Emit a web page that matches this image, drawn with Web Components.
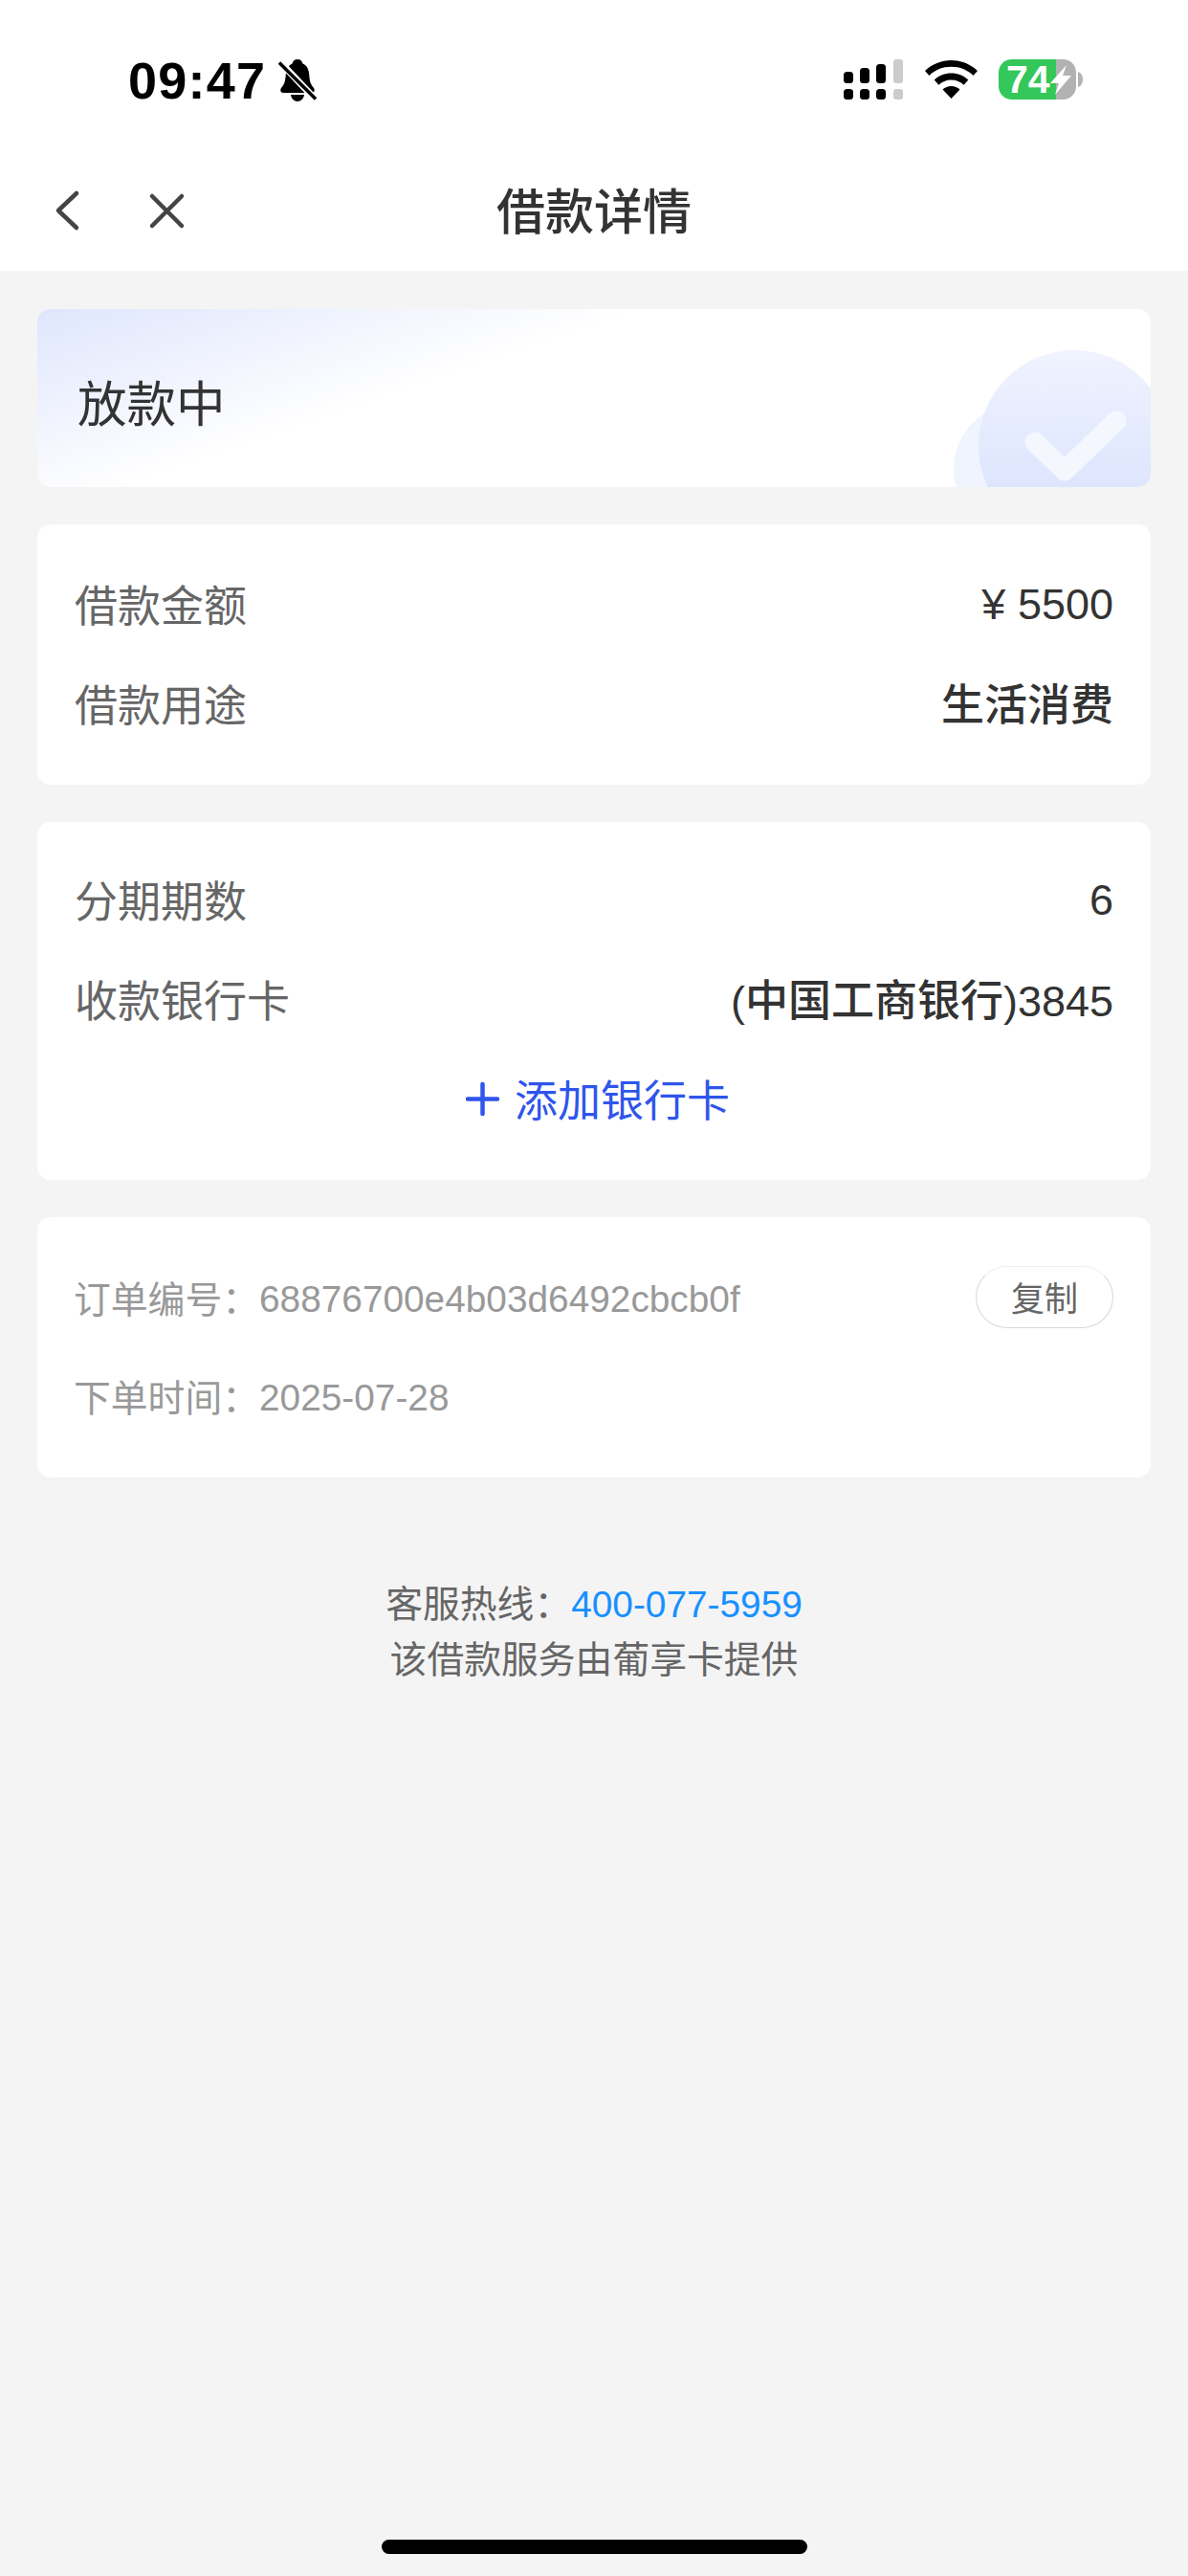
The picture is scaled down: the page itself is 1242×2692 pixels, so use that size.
<!DOCTYPE html>
<html lang="zh">
<head>
<meta charset="utf-8">
<title>借款详情</title>
<style>
  html, body { margin: 0; padding: 0; background: #f4f4f4; }
  body { font-family: "Liberation Sans", "Noto Sans CJK SC", sans-serif; }
</style>
</head>
<body>
<loan-page>
  <status-bar></status-bar>
  <nav-bar>借款详情</nav-bar>
  <main-list>
    <status-card>放款中</status-card>
    <info-card>
      <info-row label="借款金额">¥ 5500</info-row>
      <info-row label="借款用途"><b>生活消费</b></info-row>
    </info-card>
    <info-card style="padding-top: 30px; padding-bottom: 34px">
      <info-row label="分期期数">6</info-row>
      <info-row label="收款银行卡">(<b>中国工商银行</b>)3845</info-row>
      <add-card>添加银行卡</add-card>
    </info-card>
    <order-card>
      <order-row label="订单编号："  value="68876700e4b03d6492cbcb0f"><copy-button>复制</copy-button></order-row>
      <order-row label="下单时间：" value="2025-07-28"></order-row>
    </order-card>
  </main-list>
  <foot-note phone="400-077-5959">该借款服务由葡享卡提供</foot-note>
  <home-bar></home-bar>
</loan-page>

<script>
function el(name, html) {
  customElements.define(name, class extends HTMLElement {
    constructor() {
      super();
      const root = this.attachShadow({ mode: "open" });
      root.innerHTML = typeof html === "function" ? html(this) : html;
    }
  });
}

el("loan-page", `<style>
  :host { display: flex; flex-direction: column; height: 2692px; overflow: hidden; background: #f4f4f4; }
</style><slot></slot>`);

el("status-bar", `<style>
  :host { display: flex; align-items: flex-start; height: 120px; background: #fff; padding: 54px 109px 0 134px; box-sizing: border-box; color: #000; }
  .left { display: flex; align-items: center; gap: 13px; }
  .time { font: 700 54px/60px "Liberation Sans", sans-serif; letter-spacing: 1.200px; }
  .right { display: flex; align-items: center; margin-left: auto; padding-top: 8px; }
  svg { display: block; }
  .wifi { margin-left: 23px; }
  .batt { position: relative; margin-left: 22px; width: 89px; height: 42px; }
  .batt span { position: absolute; left: 8px; top: 0; font: 700 41px/42px "Liberation Sans", sans-serif; color: #fff; }
</style>
<div class="left">
  <span class="time">09:47</span>
  <svg width="40" height="44" viewBox="0 0 40 44">
    <path d="M20 0c3 0 5 2 5.500 4.500C31 7 32 12 32.500 19c.3 5 2 8 4.500 11 1.500 2 .5 5-2 5H5c-2.500 0-3.500-3-2-5 2.500-3 4-6 4.500-11C8 12 9.500 7 14.500 4.500 15 2 17 0 20 0z"/>
    <path d="M13 37h14c-.5 4-3.500 7-7 7s-6.500-3-7-7z"/>
    <path d="M2 3l36 38" stroke="#fff" stroke-width="7"/>
    <path d="M1 3.500l38 38" stroke="#000" stroke-width="3.400"/>
  </svg>
</div>
<div class="right">
  <svg width="62" height="42" viewBox="0 0 62 42">
    <rect x="0" y="13" width="10" height="12" rx="3.500"/>
    <rect x="17" y="9" width="10" height="16" rx="3.500"/>
    <rect x="34" y="5" width="10" height="20" rx="3.500"/>
    <rect x="52" y="0" width="10" height="25" rx="3" fill="#ccc"/>
    <rect x="0" y="31" width="10" height="11" rx="3.500"/>
    <rect x="17" y="31" width="10" height="11" rx="3.500"/>
    <rect x="34" y="31" width="10" height="11" rx="3.500"/>
    <rect x="52" y="31" width="10" height="11" rx="3" fill="#ccc"/>
  </svg>
  <svg class="wifi" width="55" height="40" viewBox="0 0 55 40">
    <path d="M27.500 0C17 0 7.500 4 0 11l4.500 5C10.500 10 18.500 6.800 27.500 6.800S44.500 10 50.500 16l4.500-5C47.500 4 38 0 27.500 0z"/>
    <path d="M27.500 13.500c-6.800 0-13 2.600-17.800 7l4.700 5.300c3.400-3.200 8-5.200 13.100-5.200s9.700 2 13.100 5.200l4.700-5.300c-4.800-4.400-11-7-17.800-7z"/>
    <path d="M27.500 27c-3.400 0-6.600 1.300-9 3.500L27.500 40l9-9.500c-2.400-2.200-5.600-3.500-9-3.500z"/>
  </svg>
  <div class="batt">
    <svg width="89" height="42" viewBox="0 0 89 42">
      <path d="M14 0h46v42H14C6 42 0 36 0 28V14C0 6 6 0 14 0z" fill="#34c759"/>
      <path d="M60 0h7c8 0 14 6 14 14v14c0 8-6 14-14 14h-7z" fill="#b2b2b2"/>
      <path d="M83 13c3 .8 5 4 5 8s-2 7.200-5 8z" fill="#b2b2b2"/>
      <path d="M71 6L54 25h9l-4 12 17-20h-9z" fill="#fff"/>
    </svg>
    <span>74</span>
  </div>
</div>`);

el("nav-bar", `<style>
  :host { display: flex; align-items: flex-start; justify-content: center; position: relative; height: 163px; padding-top: 68px; box-sizing: border-box; background: #fff; }
  .title { font: 500 51px/60px "Noto Sans CJK SC", "Liberation Sans", sans-serif; color: #333; }
  svg { position: absolute; left: 0; top: 0; }
</style>
<svg width="220" height="163" viewBox="0 20 220 163" fill="none" stroke="#444" stroke-width="4.500" stroke-linecap="round" stroke-linejoin="round">
  <path d="M80 102L61 120l19 18"/>
  <path d="M159 105l31 31M190 105l-31 31"/>
</svg>
<span class="title"><slot></slot></span>`);

el("main-list", `<style>
  :host { display: flex; flex-direction: column; gap: 39px; padding: 40px 39px 0; }
</style><slot></slot>`);

el("status-card", `<style>
  :host { display: flex; align-items: center; position: relative; overflow: hidden; height: 186px; padding: 5px 0 0 42px; box-sizing: border-box; border-radius: 14px;
    background: linear-gradient(161deg, #dfe6fd 0, #fff 37%); font: 400 51.500px/60px "Noto Sans CJK SC", sans-serif; color: #333; }
  svg { position: absolute; left: 900px; top: 0; }
</style>
<slot></slot>
<svg width="264" height="186" viewBox="0 0 264 186">
  <defs><linearGradient id="g" x1="0" y1="0" x2="0" y2="1">
    <stop offset="0" stop-color="#f0f3ff"/><stop offset="1" stop-color="#d6e0fd"/>
  </linearGradient></defs>
  <circle cx="126" cy="167" r="68" fill="#f0f4fe"/>
  <circle cx="184" cy="143" r="100" fill="url(#g)"/>
  <path d="M143 139l31 30 54-52" fill="none" stroke="#f5f7fe" stroke-width="21" stroke-linecap="round" stroke-linejoin="round"/>
</svg>`);

el("info-card", `<style>
  :host { display: flex; flex-direction: column; padding: 32px 39px; background: #fff; border-radius: 14px; }
</style><slot></slot>`);

el("info-row", self => `<style>
  :host { display: flex; align-items: center; justify-content: space-between; height: 104px;
    font: 400 45px/60px "Liberation Sans", "Noto Sans CJK SC", sans-serif; color: #333; }
  .label { color: #666; font-family: "Noto Sans CJK SC", sans-serif; margin-top: -3px; }
  ::slotted(b) { font-weight: 500; font-family: "Noto Sans CJK SC", sans-serif; }
</style>
<span class="label">${self.getAttribute("label")}</span>
<span><slot></slot></span>`);

el("add-card", `<style>
  :host { display: flex; align-items: center; justify-content: center; gap: 16px; height: 102px; padding: 0 0 0 8px; box-sizing: border-box;
    font: 400 45px/60px "Noto Sans CJK SC", sans-serif; color: #2f55eb; }
  svg { display: block; }
</style>
<svg width="35" height="35" viewBox="0 0 35 35" stroke="#2f55eb" stroke-width="4.500" stroke-linecap="round">
  <path d="M17.500 2v31M2 17.500h31"/>
</svg>
<span><slot></slot></span>`);

el("order-card", `<style>
  :host { display: flex; flex-direction: column; padding: 31px 39px 35px; background: #fff; border-radius: 14px; }
</style><slot></slot>`);

el("order-row", self => `<style>
  :host { display: flex; align-items: center; height: 103px; font: 400 38.800px/50px "Liberation Sans", "Noto Sans CJK SC", sans-serif; color: #999; }
  .label { font-family: "Noto Sans CJK SC", sans-serif; margin-left: -1px; }
  .value { padding-top: 6px; }
  slot { display: block; margin-left: auto; }
</style>
<span class="label">${self.getAttribute("label")}</span>
<span class="value">${self.getAttribute("value")}</span>
<slot></slot>`);

el("copy-button", `<style>
  :host { display: flex; align-items: center; justify-content: center; width: 144px; height: 65px; margin-top: 1px; box-sizing: border-box;
    border: 1.500px solid #d8d8d8; border-top-color: #f0f0f0; border-radius: 33px; font: 400 35px/40px "Noto Sans CJK SC", sans-serif; color: #666; background: #fff; }
</style><slot></slot>`);

el("foot-note", self => `<style>
  :host { display: flex; flex-direction: column; align-items: center; padding-top: 102px;
    font: 400 38.800px/55px "Noto Sans CJK SC", sans-serif; color: #666; }
  a { color: #1890ff; font-family: "Liberation Sans", sans-serif; text-decoration: none; }
</style>
<span>客服热线：<a>${self.getAttribute("phone")}</a></span>
<span><slot></slot></span>`);

el("home-bar", `<style>
  :host { display: block; width: 445px; height: 15px; margin: auto auto 23px; background: #000; border-radius: 8px; }
</style>`);
</script>
</body>
</html>
